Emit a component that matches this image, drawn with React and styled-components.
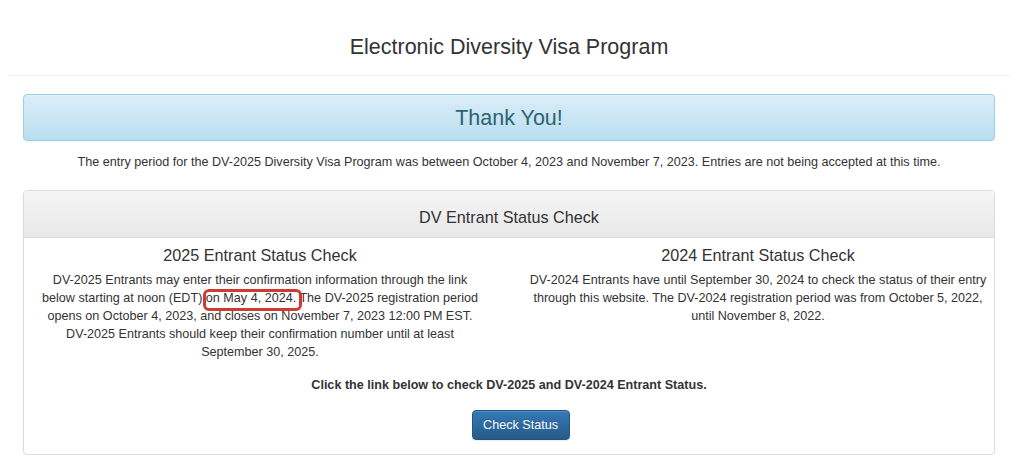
import React from 'react';
import styled, { createGlobalStyle } from 'styled-components';

const Global = createGlobalStyle`
body {
  margin: 0;
  background: #fff;
  font-family: "Liberation Sans", Arial, sans-serif;
  color: #333;
}
`;

const Header = styled.div`
margin: 0 9px 0 8px;
padding: 35px 0 16px;
border-bottom: 1px solid #eee;
text-align: center;
`;

const Title = styled.h1`
margin: 0;
font-size: 21.5px;
font-weight: 400;
line-height: 24px;
color: #333;
`;

const Container = styled.div`
margin: 0 24px 0 23px;
padding-top: 18px;
`;

const Alert = styled.div`
height: 45px;
border: 1px solid #9acfea;
border-radius: 4px;
background-image: linear-gradient(to bottom, #dbeef8 0%, #b9def0 100%);
box-shadow: inset 0 1px 0 rgba(255,255,255,.25), 0 1px 2px rgba(0,0,0,.05);
display: flex;
align-items: center;
justify-content: center;
`;

const AlertTitle = styled.h2`
margin: 0;
font-size: 21.5px;
font-weight: 400;
color: #2b6473;
line-height: 24px;
`;

const Lead = styled.p`
margin: 12px 0 19px;
font-size: 12.6px;
line-height: 18px;
text-align: center;
`;

const Panel = styled.div`
border: 1px solid #ddd;
border-radius: 4px;
overflow: hidden;
box-shadow: 0 1px 2px rgba(0,0,0,.05);
`;

const PanelHeading = styled.div`
padding: 14px 15px 8px;
background-image: linear-gradient(to bottom, #f5f5f5 0%, #e8e8e8 100%);
border-bottom: 1px solid #ddd;
text-align: center;
font-size: 16.2px;
line-height: 24px;
color: #333;
`;

const PanelBody = styled.div`
padding: 7px 0 14px;
text-align: center;
`;

const Columns = styled.div`
display: grid;
grid-template-columns: 444px 466px;
column-gap: 43px;
padding-left: 14px;
`;

const Column = styled.div``;

const SubTitle = styled.h3`
margin: 0 0 6px;
font-size: 16.2px;
font-weight: 400;
line-height: 20px;
color: #333;
`;

const Text = styled.p`
margin: 0;
font-size: 12.6px;
line-height: 18px;
`;

const Mark = styled.span`
position: relative;
&::after {
  content: "";
  position: absolute;
  left: -3px;
  right: -6px;
  top: -2px;
  bottom: -6px;
  border: 3px solid #cf3a34;
  border-radius: 6px;
}
`;

const LinkNote = styled.p`
margin: 15px 0 0;
font-size: 12.6px;
font-weight: 700;
line-height: 18px;
`;

const ButtonRow = styled.div`
display: flex;
justify-content: center;
padding: 16px 0 0 23px;
`;

const Button = styled.button`
width: 98px;
height: 30px;
padding: 0;
font-family: inherit;
font-size: 12.6px;
color: #fff;
background-image: linear-gradient(to bottom, #337ab7 0%, #265a88 100%);
border: 1px solid #245580;
border-radius: 4px;
text-shadow: 0 -1px 0 rgba(0,0,0,.2);
box-shadow: inset 0 1px 0 rgba(255,255,255,.15), 0 1px 1px rgba(0,0,0,.075);
cursor: pointer;
`;

function App() {
  return (
    <>
      <Global />
      <Header>
        <Title>Electronic Diversity Visa Program</Title>
      </Header>
      <Container>
        <Alert>
          <AlertTitle>Thank You!</AlertTitle>
        </Alert>
        <Lead>
          The entry period for the DV-2025 Diversity Visa Program was between October 4, 2023 and November 7, 2023. Entries are not being accepted at this time.
        </Lead>
        <Panel>
          <PanelHeading>DV Entrant Status Check</PanelHeading>
          <PanelBody>
            <Columns>
              <Column>
                <SubTitle>2025 Entrant Status Check</SubTitle>
                <Text>
                  DV-2025 Entrants may enter their confirmation information through the link below starting at noon (EDT) <Mark>on May 4, 2024.</Mark> The DV-2025 registration period opens on October 4, 2023, and closes on November 7, 2023 12:00 PM EST. DV-2025 Entrants should keep their confirmation number until at least September 30, 2025.
                </Text>
              </Column>
              <Column>
                <SubTitle>2024 Entrant Status Check</SubTitle>
                <Text>
                  DV-2024 Entrants have until September 30, 2024 to check the status of their entry through this website. The DV-2024 registration period was from October 5, 2022, until November 8, 2022.
                </Text>
              </Column>
            </Columns>
            <LinkNote>Click the link below to check DV-2025 and DV-2024 Entrant Status.</LinkNote>
            <ButtonRow>
              <Button>Check Status</Button>
            </ButtonRow>
          </PanelBody>
        </Panel>
      </Container>
    </>
  );
}

export default App;
